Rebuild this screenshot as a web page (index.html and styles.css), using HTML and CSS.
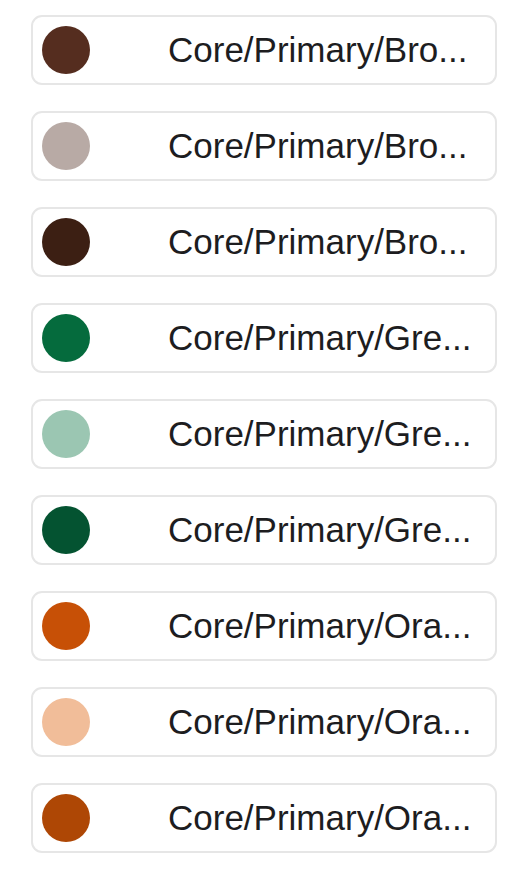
FILE: index.html
```html
<!DOCTYPE html>
<html>
<head>
<meta charset="utf-8">
<link rel="stylesheet" href="styles.css">
</head>
<body>
<div class="list">
  <div class="card"><span class="dot" style="background:#552d1f"></span><span class="name">Core/Primary/Bro...</span></div>
  <div class="card"><span class="dot" style="background:#b8aaa5"></span><span class="name">Core/Primary/Bro...</span></div>
  <div class="card"><span class="dot" style="background:#3c1f13"></span><span class="name">Core/Primary/Bro...</span></div>
  <div class="card"><span class="dot" style="background:#056b3d"></span><span class="name">Core/Primary/Gre...</span></div>
  <div class="card"><span class="dot" style="background:#9bc6b2"></span><span class="name">Core/Primary/Gre...</span></div>
  <div class="card"><span class="dot" style="background:#045331"></span><span class="name">Core/Primary/Gre...</span></div>
  <div class="card"><span class="dot" style="background:#c75006"></span><span class="name">Core/Primary/Ora...</span></div>
  <div class="card"><span class="dot" style="background:#f1bd99"></span><span class="name">Core/Primary/Ora...</span></div>
  <div class="card"><span class="dot" style="background:#ae4705"></span><span class="name">Core/Primary/Ora...</span></div>
</div>
</body>
</html>
```
FILE: styles.css
```css
html, body {
  margin: 0;
  padding: 0;
  background: #ffffff;
}
.list {
  display: flex;
  flex-direction: column;
  gap: 26px;
  padding: 15px 0 0 31px;
}
.card {
  box-sizing: border-box;
  width: 466px;
  height: 70px;
  border: 2px solid #e6e6e6;
  border-radius: 11px;
  display: flex;
  align-items: center;
  padding-left: 9px;
}
.dot {
  width: 48px;
  height: 48px;
  border-radius: 50%;
  flex: none;
}
.name {
  margin-left: 78px;
  font-family: "Liberation Sans", Arial, sans-serif;
  font-size: 35px;
  color: #1d1d1f;
  white-space: nowrap;
}
```
